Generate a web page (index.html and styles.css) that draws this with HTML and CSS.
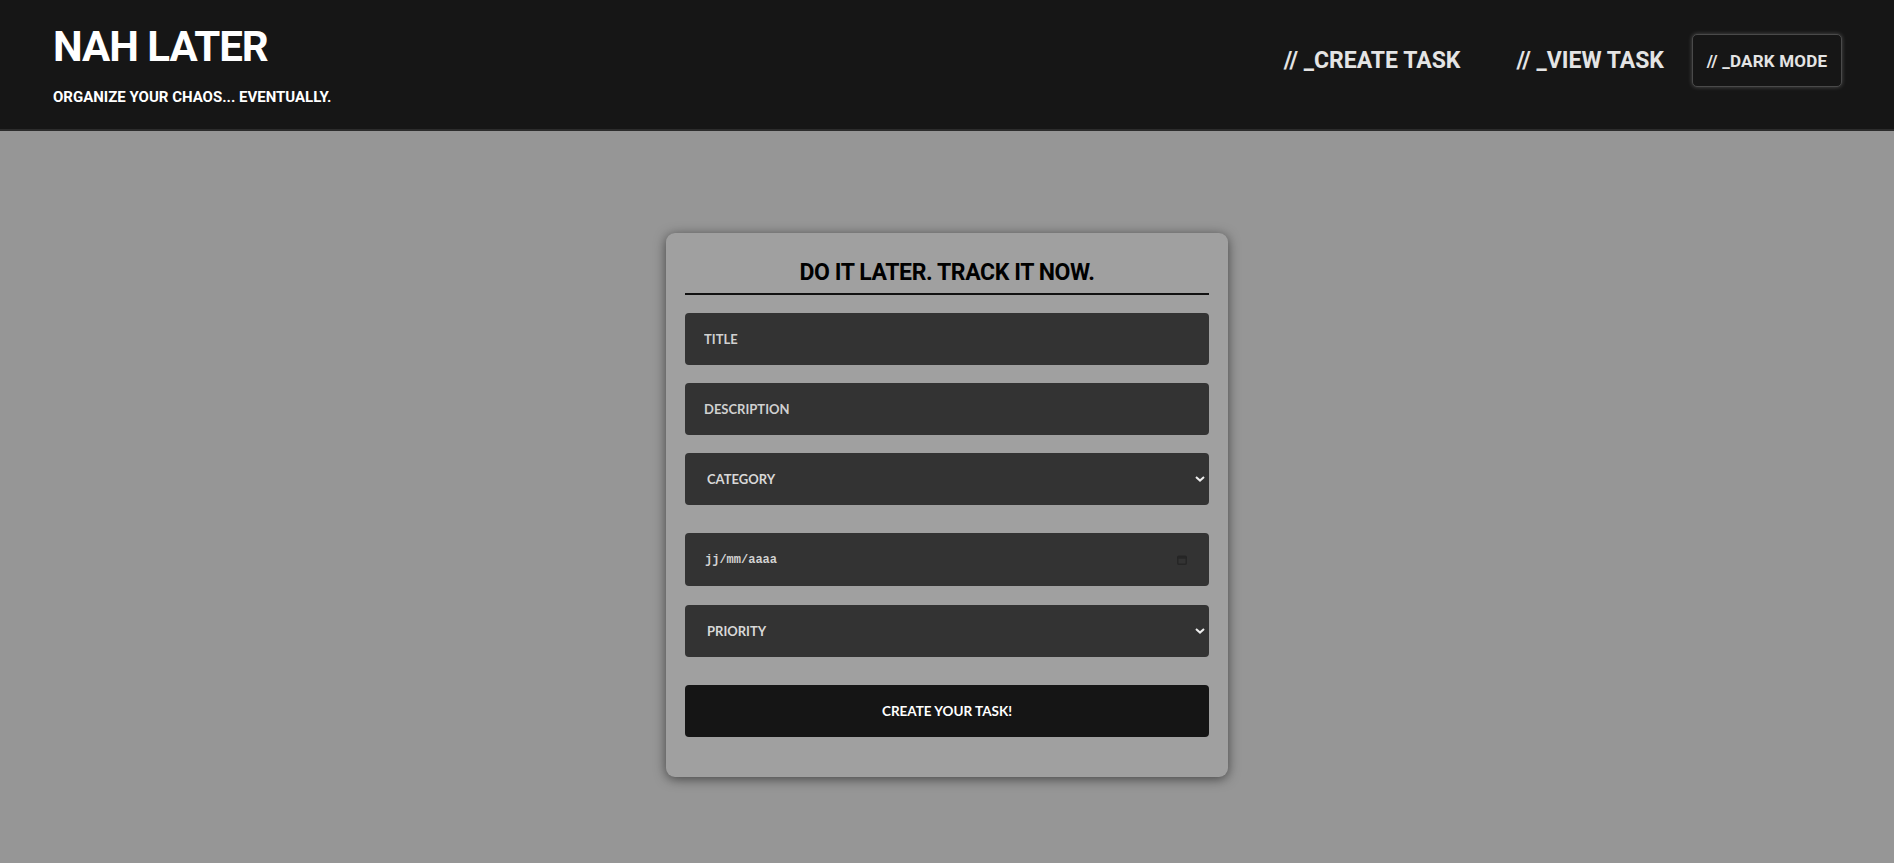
FILE: index.html
```html
<!DOCTYPE html>
<html lang="fr">
<head>
<meta charset="utf-8">
<title>Nah Later</title>
<link rel="stylesheet" href="styles.css">
</head>
<body>
<header class="site-header">
  <div class="brand">
    <h1 class="brand-title">NAH LATER</h1>
    <p class="brand-tagline">ORGANIZE YOUR CHAOS... EVENTUALLY.</p>
  </div>
  <nav class="nav">
    <a class="nav-link" href="#">// _CREATE TASK</a>
    <a class="nav-link" href="#">// _VIEW TASK</a>
    <button class="mode-btn" type="button">// _DARK MODE</button>
  </nav>
</header>
<main class="main">
  <form class="card">
    <h2 class="card-title">DO IT LATER. TRACK IT NOW.</h2>
    <div class="fields">
      <input class="field" type="text" placeholder="TITLE">
      <input class="field" type="text" placeholder="DESCRIPTION">
      <div class="field select-wrap">
        <select class="select">
          <option>CATEGORY</option>
        </select>
        <svg class="chev" width="10" height="6" viewBox="0 0 10 6"><path d="M1 1l4 3.6L9 1" fill="none" stroke="#ededed" stroke-width="2"/></svg>
      </div>
      <div class="field date-wrap">
        <input class="date-input" type="text" placeholder="jj/mm/aaaa">
        <svg class="cal" width="10" height="10" viewBox="0 0 10 10"><rect x="0.75" y="1.25" width="8.5" height="8" rx="1" fill="none" stroke="#262626" stroke-width="1.5"/><rect x="0.75" y="1.25" width="8.5" height="2.4" fill="#262626"/></svg>
      </div>
      <div class="field select-wrap prio">
        <select class="select">
          <option>PRIORITY</option>
        </select>
        <svg class="chev" width="10" height="6" viewBox="0 0 10 6"><path d="M1 1l4 3.6L9 1" fill="none" stroke="#ededed" stroke-width="2"/></svg>
      </div>
      <button class="submit" type="button">CREATE YOUR TASK!</button>
    </div>
  </form>
</main>
</body>
</html>
```
FILE: styles.css
```css
* { box-sizing: border-box; }

html, body {
  margin: 0;
  padding: 0;
}

body {
  background: #969696;
  min-height: 863px;
  font-family: Roboto, "Liberation Sans", sans-serif;
}

.site-header {
  background: #161616;
  border-bottom: 2px solid #2c2c2c;
  height: 131px;
  display: flex;
  justify-content: space-between;
  align-items: flex-start;
  padding: 26px 52px 0 53px;
}

.brand-title {
  margin: 0;
  font-size: 42px;
  line-height: 1;
  font-weight: 700;
  color: #ffffff;
  letter-spacing: -1px;
}

.brand-tagline {
  margin: 22px 0 0;
  font-size: 15px;
  line-height: 1;
  font-weight: 700;
  color: #ffffff;
  letter-spacing: 0;
}

.nav {
  display: flex;
  align-items: center;
  margin-top: 8px;
}

.nav-link {
  color: #e4e4e4;
  text-decoration: none;
  font-weight: 700;
  font-size: 23px;
  letter-spacing: 0;
  padding: 0 28px;
}

.mode-btn {
  height: 53px;
  width: 150px;
  background: #161616;
  color: #e4e4e4;
  border: 1px solid #4a4a4a;
  border-radius: 5px;
  box-shadow: 0 0 4px rgba(255, 255, 255, 0.25);
  font-family: inherit;
  font-weight: 700;
  font-size: 17px;
  letter-spacing: 0.2px;
  padding: 0;
}

.main {
  display: flex;
  justify-content: center;
  padding-top: 102px;
}

.card {
  width: 562px;
  background: #a0a0a0;
  border-radius: 9px;
  box-shadow: 0 2px 12px rgba(0, 0, 0, 0.55);
  padding: 27px 19px 40px;
}

.card-title {
  margin: 0;
  text-align: center;
  font-size: 23px;
  line-height: 26px;
  font-weight: 700;
  letter-spacing: -0.4px;
  color: #000;
  padding-bottom: 7px;
  border-bottom: 2px solid #111;
}

.fields {
  display: flex;
  flex-direction: column;
  gap: 18px;
  margin-top: 18px;
}

.field {
  height: 52px;
  background: #333333;
  border: none;
  border-radius: 4px;
  color: #d8d8d8;
  font-family: Lato, "Liberation Sans", sans-serif;
  font-weight: 700;
  font-size: 13px;
  padding: 0 19px;
  outline: none;
}

.field::placeholder {
  color: #d0d0d0;
}

.select-wrap {
  display: flex;
  align-items: center;
  padding: 0 4px 0 0;
}

.select {
  flex: 1;
  height: 100%;
  appearance: none;
  -webkit-appearance: none;
  background: transparent;
  border: none;
  color: #d8d8d8;
  font-family: inherit;
  font-weight: 700;
  font-size: 13px;
  padding: 0 0 0 22px;
  outline: none;
}

.chev {
  display: block;
  flex: none;
}

.date-wrap {
  display: flex;
  align-items: center;
  height: 53px;
  margin-top: 10px;
  padding: 0 22px 0 20px;
}

.date-input {
  flex: 1;
  background: transparent;
  border: none;
  outline: none;
  font-family: "Liberation Mono", "DejaVu Sans Mono", monospace;
  font-weight: 700;
  font-size: 12px;
  color: #d2d2d2;
  padding: 0;
}

.date-input::placeholder {
  color: #d2d2d2;
}

.cal {
  display: block;
  flex: none;
}

.prio {
  margin-top: 1px;
}

.submit {
  height: 52px;
  margin-top: 10px;
  background: #151515;
  border: none;
  border-radius: 4px;
  color: #ffffff;
  font-family: Lato, "Liberation Sans", sans-serif;
  font-size: 13.5px;
  font-weight: 700;
}
```
